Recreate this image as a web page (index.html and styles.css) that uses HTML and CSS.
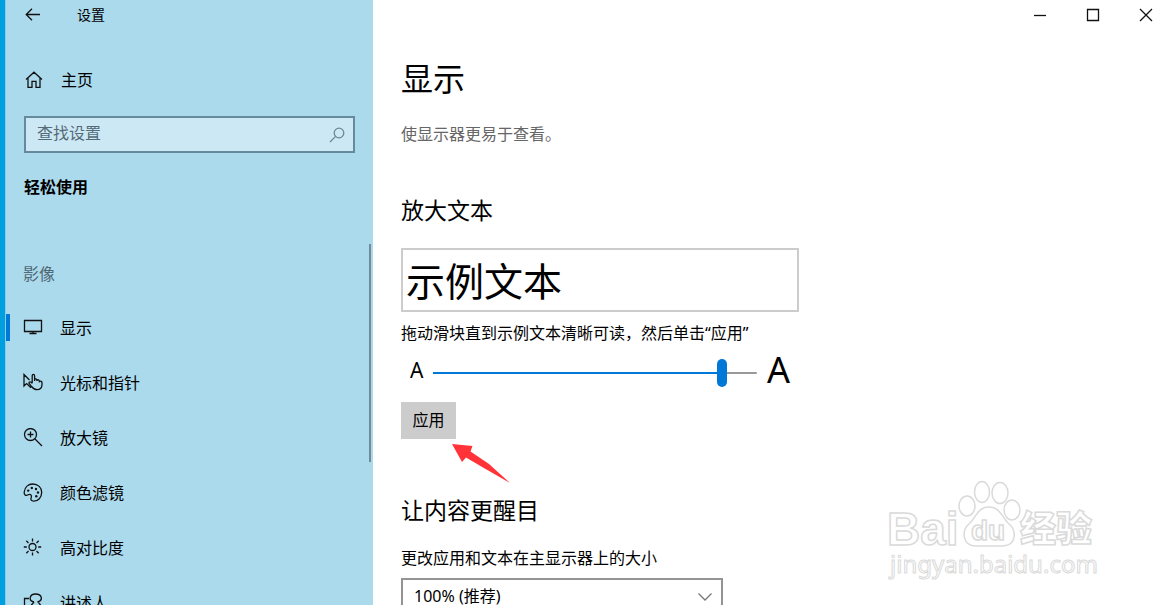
FILE: index.html
```html
<!DOCTYPE html>
<html lang="zh-CN">
<head>
<meta charset="utf-8">
<title>设置</title>
<link rel="stylesheet" href="styles.css">
</head>
<body>
<div class="window">
  <aside class="sidebar">
    <header class="titlebar">
      <button class="icon-button" aria-label="返回">
        <svg class="icon-back" width="16" height="14" viewBox="0 0 16 14"><path d="M15 6.5H1.5M7 .7L1.2 6.5L7 12.3"/></svg>
      </button>
      <span class="app-name">设置</span>
    </header>
    <a class="home" href="#home">
      <svg width="18" height="18" viewBox="0 0 18 18"><path d="M1 8.6L9 1.2L17 8.6M3 7V16.4H7V10.4H11V16.4H15V7"/></svg>
      <span>主页</span>
    </a>
    <div class="search">
      <input class="search-input" type="text" placeholder="查找设置" aria-label="查找设置">
      <svg width="16" height="16" viewBox="0 0 16 16"><circle cx="10" cy="6" r="4.8"/><path d="M6.6 9.4L1 15"/></svg>
    </div>
    <h2 class="category">轻松使用</h2>
    <div class="nav-area">
      <h3 class="group">影像</h3>
      <nav class="nav">
        <a class="nav-item active" href="#display">
          <svg width="20" height="20" viewBox="0 0 20 20"><path d="M1.5 2.5H18.5V13.5H1.5ZM10 13.5V15.5M6.5 15.5H13.5"/></svg>
          <span>显示</span>
        </a>
        <a class="nav-item" href="#cursor">
          <svg width="20" height="20" viewBox="0 0 20 20"><path d="M6.5 7L1 1.5V13L3.6 10.6L8 14.8M9.2 10V3C9.2 .8 11.6 .8 11.6 3V8M11.6 6.2C13 5.6 13.9 6 14 8M14 7C15.4 6.4 16.4 7 16.4 8.6C18 7.6 19 8.4 19 10V11.5C19 15 17 16.6 14 16.6C10.8 16.6 10 15.4 8.4 13.3L6 10.2C6 8.4 7.8 8.4 9.2 10.5"/></svg>
          <span>光标和指针</span>
        </a>
        <a class="nav-item" href="#magnifier">
          <svg width="20" height="20" viewBox="0 0 20 20"><circle cx="7.5" cy="6.5" r="6"/><path d="M12 11L19 18M7.5 3.5V9.5M4.5 6.5H10.5"/></svg>
          <span>放大镜</span>
        </a>
        <a class="nav-item" href="#filters">
          <svg width="20" height="20" viewBox="0 0 20 20"><path d="M1.2 9C1.8 4.3 5.2 1 9.8 1C15 1 18.7 4.6 18.7 9.3C18.7 14.5 15 18.2 10.8 18.2C7.8 18.2 7.4 16.5 8.3 14.3C9.1 12 7 10.6 5.2 11.8C3 13.2 .8 12.2 1.2 9Z"/><g class="dots"><circle cx="5.2" cy="7.6" r="1.2"/><circle cx="8.8" cy="5" r="1.2"/><circle cx="13" cy="6" r="1.2"/><circle cx="15" cy="9.5" r="1.2"/><circle cx="13.3" cy="13.2" r="1.2"/></g></svg>
          <span>颜色滤镜</span>
        </a>
        <a class="nav-item" href="#contrast">
          <svg width="20" height="20" viewBox="0 0 20 20"><circle cx="9.5" cy="9" r="3.5"/><path d="M9.5 .5V3.5M9.5 14.5V17.5M.8 9H3.8M15.2 9H18.2M3.3 2.8L5.5 5M13.5 13L15.7 15.2M3.3 15.2L5.5 13M13.5 5L15.7 2.8"/></svg>
          <span>高对比度</span>
        </a>
        <a class="nav-item" href="#narrator">
          <svg width="20" height="20" viewBox="0 0 20 20"><path d="M6 5.5H1.5V18.5H15.5V14M11 9C5 7.5 6.5 1 12.5 1C19.5 1 20 7.5 15 8.8L17.5 12M11 9L8 12.5"/></svg>
          <span>讲述人</span>
        </a>
      </nav>
      <div class="scrollbar"></div>
    </div>
  </aside>

  <main class="content">
    <div class="window-controls">
      <button class="icon-button" aria-label="最小化"><svg width="14" height="14" viewBox="0 0 14 14"><path d="M1 7.5H13"/></svg></button>
      <button class="icon-button" aria-label="最大化"><svg width="14" height="14" viewBox="0 0 14 14"><path d="M1.5 1.5H12.5V12.5H1.5Z"/></svg></button>
      <button class="icon-button" aria-label="关闭"><svg width="14" height="14" viewBox="0 0 14 14"><path d="M1 1L13 13M13 1L1 13"/></svg></button>
    </div>
    <h1 class="page-title">显示</h1>
    <p class="intro">使显示器更易于查看。</p>

    <section class="text-size">
      <h2 class="section-title">放大文本</h2>
      <div class="sample">示例文本</div>
      <label class="hint" for="scale">拖动滑块直到示例文本清晰可读，然后单击“应用”</label>
      <div class="slider-row">
        <span class="small-a">A</span>
        <input class="slider" id="scale" type="range" min="100" max="225" value="213">
        <span class="large-a">A</span>
      </div>
      <div class="apply-row">
        <button class="apply">应用</button>
        <svg class="pointer" width="60" height="42" viewBox="0 0 60 42"><path d="M1 1L21.5 3L19.5 8.5L38 21L59 40L32 24.5L15 14.5L11 19Z"/></svg>
      </div>
    </section>

    <section class="app-size">
      <h2 class="section-title">让内容更醒目</h2>
      <label class="hint" for="zoom">更改应用和文本在主显示器上的大小</label>
      <div class="select-wrap">
        <select class="select" id="zoom"><option>100% (推荐)</option></select>
        <svg width="16" height="10" viewBox="0 0 16 10"><path d="M1.5 1.5L8 8L14.5 1.5"/></svg>
      </div>
    </section>
  </main>

  <svg class="watermark" width="216" height="110" viewBox="0 0 216 110">
    <g class="mark">
      <text class="latin" x="-1" y="65" font-size="46">Bai</text>
      <ellipse cx="79" cy="26" rx="8" ry="10"/>
      <ellipse cx="94" cy="12" rx="7.5" ry="10.5"/>
      <ellipse cx="112" cy="13" rx="8" ry="10.5"/>
      <ellipse cx="124" cy="30" rx="8" ry="10"/>
      <path d="M101 27C90 27 88 37 82 43C73 50 74 66 88 66H115C129 65 129 50 120 43C114 37 112 27 101 27Z"/>
      <text class="latin" x="83" y="60" font-size="28">du</text>
      <text class="cjk" x="132" y="62" font-size="36">经验</text>
      <text class="url" x="2" y="93" font-size="24">jingyan.baidu.com</text>
    </g>
  </svg>
</div>
</body>
</html>
```
FILE: styles.css
```css
* {
  box-sizing: border-box;
}

body {
  margin: 0;
  background: #fff;
  color: #000;
  font-family: "Noto Sans", "Noto Sans CJK SC", sans-serif;
  font-size: 16px;
  line-height: 24px;
}

h1, h2, h3, p {
  margin: 0;
  font-weight: 400;
}

button, input, select {
  font: inherit;
  color: inherit;
}

a {
  color: inherit;
  text-decoration: none;
}

svg {
  display: block;
  flex: none;
  fill: none;
  stroke: #111;
  stroke-width: 1.3;
}

.window {
  position: relative;
  display: flex;
  height: 100vh;
  overflow: hidden;
  border-left: 5px solid #009fe0;
}

.sidebar {
  flex: none;
  width: 368px;
  background: #acdaed;
  border-left: 1px solid #8ccbe7;
}

.icon-button {
  display: flex;
  padding: 0;
  border: 0;
  background: none;
}

.titlebar {
  display: flex;
  align-items: center;
  gap: 36px;
  height: 30px;
  padding-left: 19px;
}

.app-name {
  font-size: 14px;
}

.home {
  display: flex;
  align-items: center;
  gap: 18px;
  margin-top: 38px;
  padding-left: 19px;
}

.search {
  display: flex;
  align-items: center;
  height: 37px;
  margin: 24px 18px 0;
  padding: 0 8px 0 11px;
  border: 2px solid #66899b;
  background: #cde8f5;
}

.search svg {
  stroke: #6d8794;
}

.search-input {
  flex: 1;
  min-width: 0;
  padding: 0 0 3px;
  border: 0;
  outline: 0;
  background: none;
}

.search-input::placeholder {
  color: #546b77;
  opacity: 1;
}

.category {
  margin: 22px 18px 0;
  font-size: 16px;
  font-weight: 700;
}

.nav-area {
  position: relative;
  margin-top: 45px;
  padding-top: 18px;
}

.scrollbar {
  position: absolute;
  top: 0;
  right: 2px;
  width: 2px;
  height: 218px;
  background: #728b98;
}

.group {
  padding-left: 17px;
  color: #4f6874;
  font-size: 16px;
}

.nav {
  margin-top: 28px;
}

.nav-item {
  display: flex;
  align-items: center;
  gap: 17px;
  height: 27px;
  margin-bottom: 28px;
  padding-left: 17px;
}

.active {
  box-shadow: inset 4px 0 #0078d7;
}

.dots {
  fill: #111;
  stroke: none;
}

.content {
  flex: 1;
  min-width: 0;
  padding: 0 5px 0 28px;
}

.window-controls {
  display: flex;
  justify-content: flex-end;
  align-items: center;
  gap: 39px;
  height: 30px;
}

.page-title {
  margin-top: 27px;
  font-size: 32px;
  line-height: 44px;
}

.intro {
  margin-top: 21px;
  color: #666;
}

.text-size {
  margin-top: 48px;
}

.section-title {
  font-size: 23px;
  line-height: 32px;
}

.sample {
  max-width: 398px;
  margin-top: 22px;
  padding: 5px 3px 3px;
  border: 2px solid #ccc;
  font-size: 39px;
  line-height: 52px;
}

.hint {
  display: block;
  margin-top: 9px;
}

.slider-row {
  display: flex;
  align-items: center;
  gap: 10px;
  max-width: 398px;
  height: 56px;
  padding: 0 9px;
}

.small-a {
  padding-bottom: 6px;
  font-size: 21px;
}

.large-a {
  padding-bottom: 6px;
  font-size: 36px;
}

.slider {
  flex: 1;
  min-width: 0;
  height: 28px;
  margin: 0;
  appearance: none;
  background: linear-gradient(to right, #0078d7 90%, #999 90%) center / 100% 2px no-repeat;
}

.slider::-webkit-slider-thumb {
  appearance: none;
  width: 10px;
  height: 28px;
  border-radius: 5px;
  background: #0078d7;
}

.apply-row {
  display: flex;
  align-items: flex-start;
  height: 83px;
  margin-top: 1px;
}

.apply {
  width: 55px;
  height: 37px;
  padding: 0 0 2px;
  border: 0;
  background: #ccc;
}

.pointer {
  align-self: flex-end;
  margin-left: -5px;
  fill: #ff3338;
  stroke: none;
}

.app-size {
  margin-top: 9px;
}

.app-size .hint {
  margin-top: 20px;
}

.select-wrap {
  position: relative;
  max-width: 322px;
  margin-top: 8px;
}

.select {
  display: block;
  width: 100%;
  height: 37px;
  padding: 0 11px 2px;
  border: 2px solid #949494;
  border-radius: 0;
  background: #fff;
  appearance: none;
}

.select-wrap svg {
  position: absolute;
  top: 14px;
  right: 10px;
  stroke: #777;
}

.watermark {
  position: absolute;
  right: 54px;
  bottom: 15px;
}

.mark {
  fill: #fff;
  stroke: #dadada;
  stroke-width: 1.5;
}

.latin {
  font-family: "Liberation Sans", sans-serif;
  font-weight: 700;
}

.cjk {
  font-family: "Noto Sans CJK SC", sans-serif;
  font-weight: 900;
}

.url {
  font-family: "Noto Sans", sans-serif;
  stroke-width: 1;
}
```
